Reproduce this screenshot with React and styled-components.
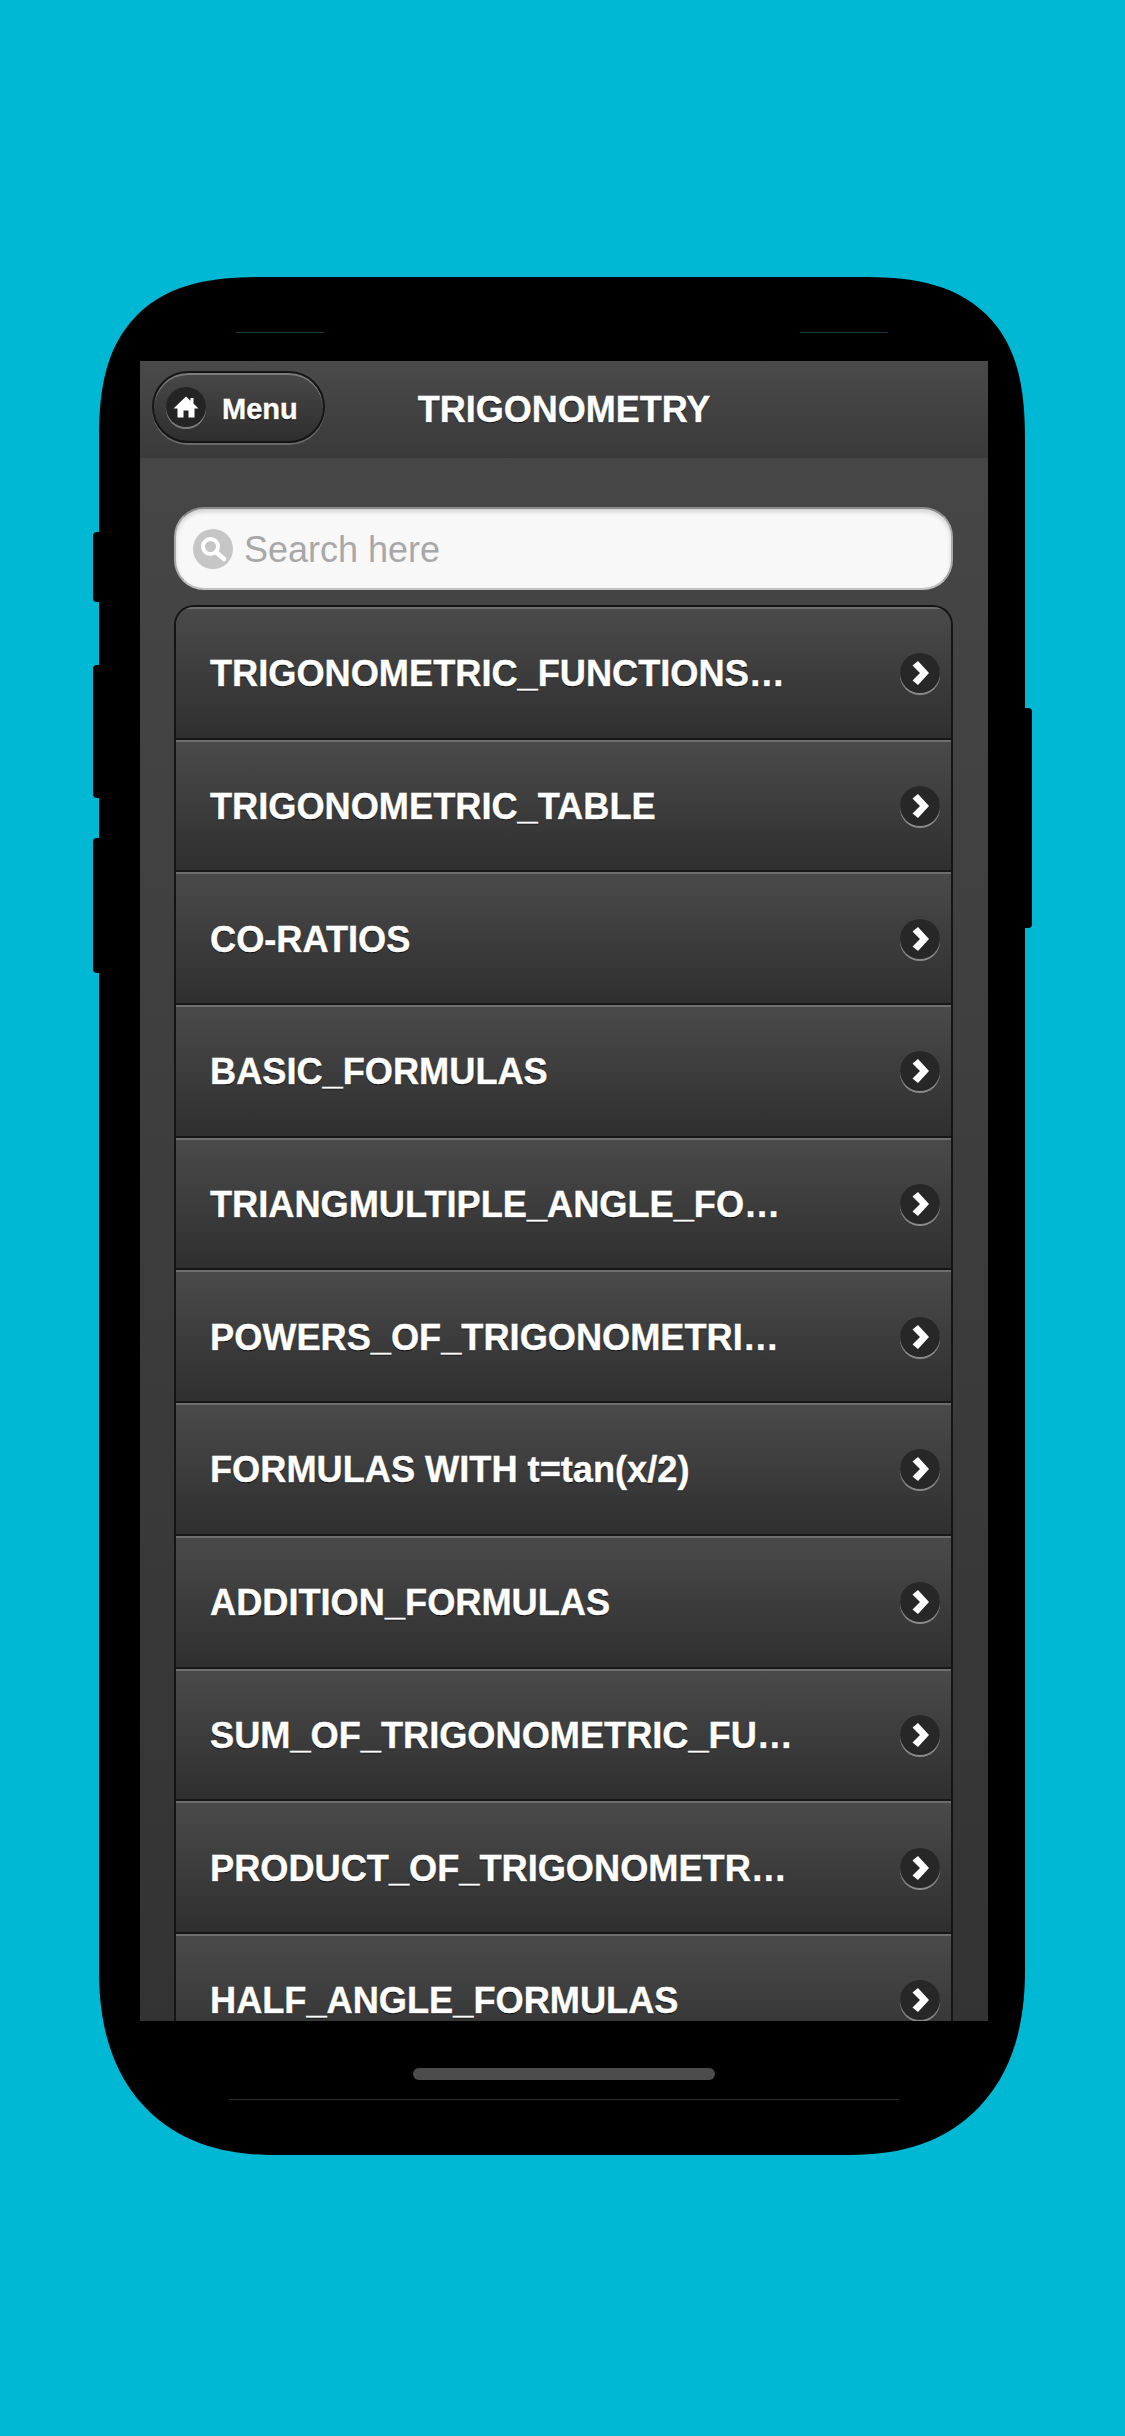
import React from 'react';
import styled, { createGlobalStyle } from 'styled-components';

const topics = [
    'TRIGONOMETRIC_FUNCTIONS…',
    'TRIGONOMETRIC_TABLE',
    'CO-RATIOS',
    'BASIC_FORMULAS',
    'TRIANGMULTIPLE_ANGLE_FO…',
    'POWERS_OF_TRIGONOMETRI…',
    'FORMULAS WITH t=tan(x/2)',
    'ADDITION_FORMULAS',
    'SUM_OF_TRIGONOMETRIC_FU…',
    'PRODUCT_OF_TRIGONOMETR…',
    'HALF_ANGLE_FORMULAS',
];

function App() {
    return (
        <Page>
            <GlobalStyle />
            <Phone>
                <SideButton $side="left" $top={255} $height={70} />
                <SideButton $side="left" $top={388} $height={133} />
                <SideButton $side="left" $top={561} $height={135} />
                <SideButton $side="right" $top={431} $height={220} />
                <Speakers>
                    <SpeakerLine />
                    <SpeakerLine />
                </Speakers>
                <Screen>
                    <Header>
                        <MenuButton>
                            <IconDisc>
                                <svg width="26" height="26" viewBox="0 0 26 26">
                                    <path d="M13 2.5 L17.5 6.8 L17.5 4 L20.5 4 L20.5 9.6 L25.5 14.5 L21.5 14.5 L21.5 23.5 L15.5 23.5 L15.5 16.5 L10.5 16.5 L10.5 23.5 L4.5 23.5 L4.5 14.5 L0.5 14.5 Z" fill="#fff" />
                                </svg>
                            </IconDisc>
                            <MenuLabel>Menu</MenuLabel>
                        </MenuButton>
                        <Title>TRIGONOMETRY</Title>
                    </Header>
                    <Content>
                        <SearchBox>
                            <SearchDisc>
                                <svg width="30" height="30" viewBox="0 0 30 30">
                                    <circle cx="12.5" cy="12.5" r="7.5" fill="none" stroke="#fff" strokeWidth="4" />
                                    <path d="M18 18 L26 25" stroke="#fff" strokeWidth="4.5" strokeLinecap="round" />
                                </svg>
                            </SearchDisc>
                            <Placeholder>Search here</Placeholder>
                        </SearchBox>
                        <List>
                            {topics.map((topic, index) => (
                                <Row key={index}>
                                    <RowText>{topic}</RowText>
                                    <ArrowDisc>
                                        <svg width="26" height="26" viewBox="0 0 26 26">
                                            <path d="M11 1 L22 13 L11 25 L5.5 20.5 L13 13 L5.5 5.5 Z" fill="#fff" />
                                        </svg>
                                    </ArrowDisc>
                                </Row>
                            ))}
                        </List>
                    </Content>
                </Screen>
                <Footer>
                    <HomeBar />
                    <ChinLine />
                </Footer>
            </Phone>
        </Page>
    );
}

export default App;

const GlobalStyle = createGlobalStyle`
    html, body {
        margin: 0;
        padding: 0;
        background: #00b8d4;
    }
    * {
        box-sizing: border-box;
    }
`

const Page = styled.div`
    width: 1125px;
    height: 2436px;
    padding-top: 277px;
    display: flex;
    justify-content: center;
    align-items: flex-start;
    overflow: hidden;
    background: #00b8d4;
    font-family: "Liberation Sans", Arial, sans-serif;
`

const Phone = styled.div`
    position: relative;
    width: 926px;
    height: 1878px;
    margin-right: 1px;
    padding: 0 37px 0 41px;
    display: flex;
    flex-direction: column;
    background: #000;
    border-radius: 165px 165px 175px 175px / 165px 165px 185px 185px;
    corner-shape: superellipse(1.4) superellipse(1.4) superellipse(1.2) superellipse(1.2);
`

const SideButton = styled.div`
    position: absolute;
    top: ${props => props.$top}px;
    ${props => props.$side}: ${props => props.$side === 'left' ? -6 : -7}px;
    width: 12px;
    height: ${props => props.$height}px;
    background: #000;
    border-radius: 4px;
`

const Speakers = styled.div`
    height: 84px;
    padding: 55px 100px 0 96px;
    display: flex;
    justify-content: space-between;
    align-items: flex-start;
`

const SpeakerLine = styled.div`
    width: 88px;
    height: 1px;
    background: #123a40;
`

const Screen = styled.div`
    height: 1660px;
    display: flex;
    flex-direction: column;
    overflow: hidden;
    background: linear-gradient(#474747, #333333);
`

const Header = styled.div`
    flex: none;
    height: 97px;
    padding: 0 12px 6px;
    display: grid;
    grid-template-columns: 1fr auto 1fr;
    align-items: center;
    background: linear-gradient(#4a4a4a, #3a3a3a);
`

const MenuButton = styled.div`
    width: 173px;
    height: 72px;
    padding-left: 12px;
    display: flex;
    align-items: center;
    gap: 16px;
    border-radius: 36px;
    border: 2px solid #151515;
    background: linear-gradient(#484848, #2e2e2e);
    box-shadow: inset 0 2px 0 #7a7a7a, 0 2px 0 #6a6a6a;
`

const IconDisc = styled.div`
    flex: none;
    width: 40px;
    height: 40px;
    display: flex;
    justify-content: center;
    align-items: center;
    border-radius: 50%;
    background: #242424;
    box-shadow: 0 2px 0 #7d7d7d;
`

const MenuLabel = styled.span`
    padding-top: 5px;
    color: #fff;
    font-size: 29px;
    font-weight: bold;
    -webkit-text-stroke: 0.4px #fff;
    text-shadow: 0 1px 1px #000;
`

const Title = styled.h1`
    margin: 6px 0 0;
    color: #fff;
    font-size: 36px;
    font-weight: bold;
    -webkit-text-stroke: 0.4px #fff;
    text-shadow: 0 1px 1px #000;
`

const Content = styled.div`
    flex: 1;
    padding: 49px 35px 0 34px;
`

const SearchBox = styled.div`
    height: 83px;
    margin-bottom: 15px;
    padding-left: 17px;
    display: flex;
    align-items: center;
    gap: 11px;
    border-radius: 30px;
    background: #f8f8f8;
    border: 2px solid #a9a9a9;
    border-top-color: #8c8c8c;
    border-bottom-color: #c0c0c0;
    box-shadow: inset 0 3px 4px rgba(0, 0, 0, 0.15);
`

const SearchDisc = styled.div`
    width: 40px;
    height: 40px;
    display: flex;
    justify-content: center;
    align-items: center;
    border-radius: 50%;
    background: #c6c6c6;
`

const Placeholder = styled.span`
    padding-top: 3px;
    color: #a8a8a8;
    font-size: 36px;
`

const List = styled.div`
    border: 2px solid #141414;
    border-bottom: none;
    border-radius: 20px 20px 0 0;
    overflow: hidden;
`

const Row = styled.div`
    height: 132.7px;
    padding: 0 11px 0 34px;
    display: flex;
    justify-content: space-between;
    align-items: center;
    border-top: 2px solid #6e6e6e;
    border-bottom: 2px solid #171717;
    background: linear-gradient(#4a4a4a, #2f2f2f);
`

const RowText = styled.span`
    padding-top: 2px;
    color: #fff;
    font-size: 36.2px;
    font-weight: bold;
    white-space: nowrap;
    -webkit-text-stroke: 0.4px #fff;
    text-shadow: 0 1px 1px #000;
`

const ArrowDisc = styled(IconDisc)`
    background: #272727;
    box-shadow: 0 2px 0 #8a8a8a;
`

const Footer = styled.div`
    flex: 1;
    padding-top: 47px;
    display: flex;
    flex-direction: column;
    align-items: center;
    gap: 19px;
`

const HomeBar = styled.div`
    width: 302px;
    height: 12px;
    border-radius: 6px;
    background: #4c4c4c;
`

const ChinLine = styled.div`
    width: 670px;
    height: 1px;
    background: #2c2c2c;
`
